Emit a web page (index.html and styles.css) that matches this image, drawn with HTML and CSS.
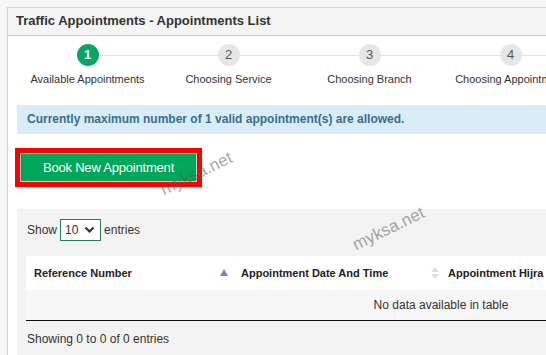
FILE: index.html
```html
<!DOCTYPE html>
<html lang="en">
<head>
    <meta charset="UTF-8">
    <meta name="viewport" content="width=device-width, initial-scale=1.0">
    <title>Traffic Appointments</title>
    <link rel="stylesheet" href="styles.css">
</head>
<body>
    <div class="panel">
        <div class="panel-heading">Traffic Appointments - Appointments List</div>

        <div class="panel-body">
            <!-- Шаги записи -->
            <div class="steps">
                <div class="step active">
                    <span class="circle">1</span>
                    <span class="step-label">Available Appointments</span>
                </div>
                <div class="step">
                    <span class="circle">2</span>
                    <span class="step-label">Choosing Service</span>
                </div>
                <div class="step">
                    <span class="circle">3</span>
                    <span class="step-label">Choosing Branch</span>
                </div>
                <div class="step">
                    <span class="circle">4</span>
                    <span class="step-label">Choosing Appointment</span>
                </div>
            </div>

            <div class="alert">Currently maximum number of 1 valid appointment(s) are allowed.</div>

            <div class="book">
                <button type="button" class="btn-book">Book New Appointment</button>
            </div>

            <div class="table-box">
                <div class="length">
                    Show
                    <span class="select">10 <svg width="11" height="8" viewBox="0 0 11 8"><path d="M1.5 1.5 L5.5 5.5 L9.5 1.5" fill="none" stroke="#333" stroke-width="2.2"/></svg></span>
                    entries
                </div>

                <table>
                    <thead>
                        <tr>
                            <th class="c1">Reference Number <span class="sort asc"></span></th>
                            <th class="c2">Appointment Date And Time <span class="sort both"></span></th>
                            <th class="c3">Appointment Hijra Date</th>
                        </tr>
                    </thead>
                    <tbody>
                        <tr>
                            <td colspan="3" class="empty">No data available in table</td>
                        </tr>
                    </tbody>
                </table>

                <div class="info">Showing 0 to 0 of 0 entries</div>
            </div>
        </div>

        <span class="mark mark-1">myksa.net</span>
        <span class="mark mark-2">myksa.net</span>
    </div>
</body>
</html>
```

FILE: styles.css
```css
body {
    margin: 0;
    background: #f7f7f7;
    font-family: "Liberation Sans", Arial, sans-serif;
    color: #333;
    overflow: hidden;
}
.panel {
    position: relative;
    width: 900px;
    height: 400px;
    margin: 7px 0 0 7px;
    background: #fff;
    border: 1px solid #d2d2d2;
}
.panel-heading {
    height: 27px;
    line-height: 26px;
    padding-left: 8px;
    background: #f5f5f5;
    border-bottom: 1px solid #cfcfcf;
    font-size: 13px;
    font-weight: bold;
    color: #333;
}
.panel-body {
    padding-left: 9px;
}
.steps {
    display: flex;
    padding-top: 8px;
    height: 61px;
}
.step {
    position: relative;
    width: 141px;
    display: flex;
    flex-direction: column;
    align-items: center;
}
.step::after {
    content: "";
    position: absolute;
    top: 11px;
    left: 50%;
    width: 141px;
    height: 1px;
    background: #e3e3e3;
}
.circle {
    position: relative;
    z-index: 1;
    width: 22px;
    height: 22px;
    line-height: 22px;
    border-radius: 50%;
    background: #e6e6e6;
    color: #555;
    font-size: 13px;
    text-align: center;
}
.step.active .circle {
    background: #0aa562;
    color: #fff;
    font-weight: bold;
}
.step-label {
    margin-top: 7px;
    font-size: 11px;
    white-space: nowrap;
    color: #333;
}
.alert {
    height: 29px;
    line-height: 29px;
    padding-left: 10px;
    background: #d9edf7;
    color: #3a6d8e;
    font-size: 12px;
    font-weight: bold;
}
.book {
    margin: 14px 0 0 -2px;
    height: 61px;
}
.btn-book {
    width: 187px;
    height: 39px;
    padding: 0;
    border: 5px solid #ff0000;
    box-shadow: inset 0 0 0 1px #cfcfcf;
    background: #00a65a;
    color: #fff;
    font-family: "Liberation Sans", Arial, sans-serif;
    font-size: 13px;
    letter-spacing: -0.2px;
    cursor: pointer;
}
.table-box {
    background: #f3f3f3;
    padding: 10px 0 0 10px;
    height: 160px;
}
.length {
    display: flex;
    align-items: center;
    gap: 3px;
    font-size: 12px;
    color: #333;
}
.select {
    display: flex;
    align-items: center;
    justify-content: space-between;
    box-sizing: border-box;
    width: 41px;
    height: 22px;
    padding: 0 5px 0 4px;
    border: 1px solid #2a7d5c;
    background: #fff;
    font-size: 12px;
}
table {
    margin: 15px 0 0 -1px;
    width: 830px;
    border-collapse: collapse;
    font-size: 11px;
}
th {
    position: relative;
    height: 34px;
    padding: 0 8px;
    background: #fff;
    text-align: left;
    font-weight: bold;
    color: #222;
    white-space: nowrap;
}
.c1, .c2 {
    width: 191px;
}
.sort {
    position: absolute;
    right: 5px;
    top: 13px;
    width: 0;
    height: 0;
}
.sort.asc {
    border-left: 4px solid transparent;
    border-right: 4px solid transparent;
    border-bottom: 7px solid #7b7fd6;
}
.sort.both::before,
.sort.both::after {
    content: "";
    position: absolute;
    left: -4px;
    border-left: 4px solid transparent;
    border-right: 4px solid transparent;
}
.sort.both::before {
    top: -2px;
    border-bottom: 5px solid #dcdcdc;
}
.sort.both::after {
    top: 5px;
    border-top: 5px solid #dcdcdc;
}
td.empty {
    height: 30px;
    padding: 0;
    background: #f7f7f7;
    border-bottom: 1px solid #111;
    text-align: center;
    font-size: 12px;
    color: #333;
}
.info {
    margin-top: 11px;
    font-size: 12px;
    color: #333;
}
.mark {
    position: absolute;
    font-size: 17px;
    color: rgba(90, 90, 90, 0.55);
    transform: rotate(-26deg);
    white-space: nowrap;
}
.mark-1 {
    left: 150px;
    top: 156px;
}
.mark-2 {
    left: 342px;
    top: 211px;
}
```
